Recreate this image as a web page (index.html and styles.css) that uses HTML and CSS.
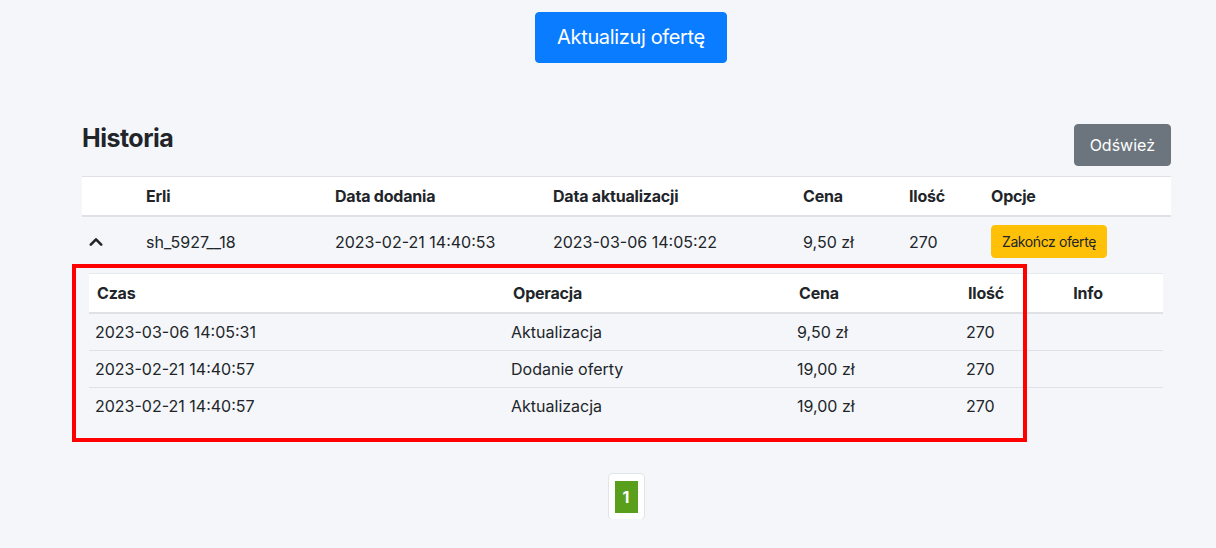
FILE: index.html
```html
<!DOCTYPE html>
<html lang="pl">
<head>
  <meta charset="UTF-8" />
  <title>Historia ofert</title>
  <link rel="stylesheet" href="styles.css">
</head>
<body>
  <div class="top-actions">
    <button class="btn btn-primary btn-lg">Aktualizuj ofertę</button>
  </div>

  <div class="history">
    <div class="history-head">
      <h3>Historia</h3>
      <button class="btn btn-secondary">Odśwież</button>
    </div>

    <table class="table main-table">
      <colgroup>
        <col style="width:56px"><col style="width:189px"><col style="width:218px"><col style="width:250px">
        <col style="width:106px"><col style="width:82px"><col>
      </colgroup>
      <thead>
        <tr>
          <th></th>
          <th>Erli</th>
          <th>Data dodania</th>
          <th>Data aktualizacji</th>
          <th>Cena</th>
          <th>Ilość</th>
          <th>Opcje</th>
        </tr>
      </thead>
      <tbody>
        <tr class="offer-row">
          <td class="toggle">
            <svg width="14" height="9" viewBox="0 0 14 9"><path d="M1.8 7.6 L7 2.4 L12.2 7.6" fill="none" stroke="#212529" stroke-width="2.6" stroke-linecap="round" stroke-linejoin="round"/></svg>
          </td>
          <td>sh_5927__18</td>
          <td>2023-02-21 14:40:53</td>
          <td>2023-03-06 14:05:22</td>
          <td>9,50 zł</td>
          <td>270</td>
          <td><button class="btn btn-warning btn-sm">Zakończ ofertę</button></td>
        </tr>
        <tr class="details-row">
          <td colspan="7">
            <table class="table sub-table">
              <colgroup>
                <col style="width:416px"><col style="width:286px"><col style="width:169px"><col style="width:53px"><col>
              </colgroup>
              <thead>
                <tr>
                  <th>Czas</th>
                  <th>Operacja</th>
                  <th>Cena</th>
                  <th>Ilość</th>
                  <th class="center">Info</th>
                </tr>
              </thead>
              <tbody>
                <tr><td>2023-03-06 14:05:31</td><td>Aktualizacja</td><td>9,50 zł</td><td>270</td><td></td></tr>
                <tr><td>2023-02-21 14:40:57</td><td>Dodanie oferty</td><td>19,00 zł</td><td>270</td><td></td></tr>
                <tr class="last"><td>2023-02-21 14:40:57</td><td>Aktualizacja</td><td>19,00 zł</td><td>270</td><td></td></tr>
              </tbody>
            </table>
          </td>
        </tr>
      </tbody>
    </table>

    <div class="pagination">
      <span class="page active">1</span>
    </div>
  </div>

  <div class="highlight"></div>
</body>
</html>
```

FILE: styles.css
```css
    body {
      margin: 0;
      position: relative;
      font-family: 'Inter', 'Noto Sans', sans-serif;
      font-size: 16px;
      line-height: 24px;
      color: #212529;
      background-color: #f4f6f9;
    }

    .btn {
      display: inline-block;
      border: 1px solid transparent;
      border-radius: 4px;
      font-family: inherit;
      font-size: 16px;
      line-height: 24px;
      padding: 8px 15px;
      color: #fff;
      cursor: pointer;
    }

    .btn-primary {
      background-color: #0a7cff;
      border-color: #0a7cff;
    }

    .btn-lg {
      font-size: 20px;
      line-height: 29px;
      padding: 10px 21px;
      letter-spacing: -0.35px;
    }

    .btn-secondary {
      background-color: #6c757d;
      border-color: #6c757d;
    }

    .btn-warning {
      background-color: #ffc107;
      border-color: #ffc107;
      color: #212529;
    }

    .btn-sm {
      font-size: 14px;
      line-height: 21px;
      padding: 5px 10px;
      letter-spacing: -0.4px;
    }

    .top-actions {
      display: flex;
      justify-content: center;
      padding-top: 12px;
      padding-left: 46px;
    }

    .history {
      margin: 58px 45px 0 82px;
    }

    .history-head {
      display: flex;
      justify-content: space-between;
      align-items: flex-start;
    }

    .history-head h3 {
      margin: 0;
      font-size: 25px;
      line-height: 34px;
      font-weight: 700;
      letter-spacing: -0.5px;
    }

    .history-head .btn {
      margin-top: 3px;
    }

    .table {
      width: 100%;
      border-collapse: collapse;
      table-layout: fixed;
    }

    .main-table {
      margin-top: 10px;
      border-top: 1px solid #dee2e6;
    }

    .main-table thead th {
      background: #fff;
      text-align: left;
      font-weight: 700;
      padding: 7px 8px;
      border-bottom: 2px solid #dee2e6;
      letter-spacing: -0.2px;
    }

    .offer-row td {
      padding: 8px;
      vertical-align: middle;
      white-space: nowrap;
    }

    .offer-row .toggle {
      line-height: 0;
      padding-left: 7px;
    }

    .details-row > td {
      padding: 7px 8px 8px 7px;
    }

    .sub-table {
      border-top: 1px solid #e6e9ed;
    }

    .sub-table th {
      background: #fff;
      text-align: left;
      font-weight: 700;
      padding: 6px;
      border-bottom: 2px solid #dee2e6;
      letter-spacing: -0.2px;
    }

    .sub-table td {
      padding: 6px;
      border-bottom: 1px solid #dee2e6;
    }

    .sub-table tr.last td {
      border-bottom: none;
    }

    .sub-table .center {
      text-align: center;
    }

    .pagination {
      display: flex;
      justify-content: center;
      margin-top: 42px;
      padding-right: 1px;
    }

    .page {
      display: flex;
      align-items: center;
      justify-content: center;
      width: 23px;
      height: 32px;
      border: 6px solid #fff;
      border-top-width: 7px;
      box-shadow: 0 0 0 1px #e1e4e8;
      border-radius: 4px;
      background-clip: padding-box;
      font-weight: 700;
      color: #fff;
    }

    .page.active {
      background-color: #5a9f1b;
    }

    .highlight {
      position: absolute;
      left: 72px;
      top: 264px;
      width: 947px;
      height: 170px;
      border: 4px solid #ff0000;
      pointer-events: none;
    }
```
